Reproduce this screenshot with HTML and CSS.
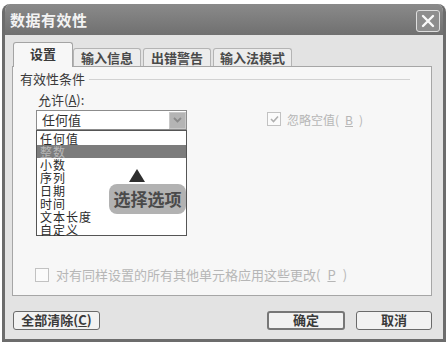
FILE: index.html
```html
<!DOCTYPE html>
<html lang="zh-CN">
<head>
    <meta charset="UTF-8">
    <title>数据有效性</title>
    <link rel="stylesheet" href="styles.css">
</head>
<body>
    <div class="dialog">
        <!-- Title bar -->
        <div class="titlebar">
            <span class="title">数据有效性</span>
            <span class="close-btn">
                <svg width="14" height="14" viewBox="0 0 14 14">
                    <path d="M2 2 L12 12 M12 2 L2 12" stroke="#fafafa" stroke-width="2.4" stroke-linecap="round"/>
                </svg>
            </span>
        </div>

        <div class="dialog-body">
            <!-- Tabs -->
            <div class="tabs">
                <div class="tab active">设置</div>
                <div class="tab tab-info">输入信息</div>
                <div class="tab tab-error">出错警告</div>
                <div class="tab tab-ime">输入法模式</div>
            </div>

            <!-- Tab panel -->
            <div class="panel">
                <div class="group-title">有效性条件<span class="rule"></span></div>

                <div class="criteria">
                    <div class="allow-col">
                        <div class="field-label">允许(<u>A</u>):</div>
                        <div class="combo">
                            <span>任何值</span>
                            <span class="combo-arrow">
                                <svg width="9" height="6" viewBox="0 0 9 6">
                                    <path d="M1 1 L4.5 4.5 L8 1" fill="none" stroke="#8a8a8a" stroke-width="1.8"/>
                                </svg>
                            </span>

                            <ul class="droplist">
                                <li>任何值</li>
                                <li class="selected">整数</li>
                                <li>小数</li>
                                <li>序列</li>
                                <li>日期</li>
                                <li>时间</li>
                                <li>文本长度</li>
                                <li>自定义</li>
                            </ul>

                            <span class="pointer"></span>
                            <span class="callout">选择选项</span>
                        </div>
                    </div>

                    <label class="check disabled ignore-blank">
                        <span class="box">
                            <svg width="9" height="8" viewBox="0 0 9 8">
                                <path d="M1 4 L3.5 6.5 L8 1.5" fill="none" stroke="#b0b0b0" stroke-width="1.6"/>
                            </svg>
                        </span>
                        忽略空值(<u>B</u>)
                    </label>
                </div>

                <label class="check disabled apply-all">
                    <span class="box"></span>
                    对有同样设置的所有其他单元格应用这些更改(<u>P</u>)
                </label>
            </div>

            <!-- Buttons -->
            <div class="buttons">
                <div class="btn btn-clear">全部清除(<u>C</u>)</div>
                <div class="btn btn-ok">确定</div>
                <div class="btn btn-cancel">取消</div>
            </div>
        </div>
    </div>
</body>
</html>
```

FILE: styles.css
```css
* {
    box-sizing: border-box;
    margin: 0;
    padding: 0;
}

body {
    background-color: #ffffff;
    font-family: "Noto Sans CJK SC", "DejaVu Sans", sans-serif;
    font-size: 13px;
    color: #2f2f2f;
}

u {
    text-decoration: underline;
}

.dialog {
    margin: 4px 0 0 2px;
    width: 444px;
    height: 338px;
    border: 3px solid #6c6c6c;
    border-top: none;
    border-radius: 8px 8px 0 0;
    background-color: #e3e3e3;
    display: flex;
    flex-direction: column;
    overflow: hidden;
}

/* Title bar */
.titlebar {
    height: 31px;
    flex: 0 0 auto;
    background: linear-gradient(#8a8a8a, #707070);
    display: flex;
    align-items: center;
    justify-content: space-between;
    padding: 0 3px 0 5px;
}

.title {
    font-size: 15px;
    font-weight: 700;
    color: #f3f3f3;
    letter-spacing: 0.5px;
}

.close-btn {
    width: 24px;
    height: 22px;
    margin-top: 2px;
    border: 1px solid #dedede;
    border-radius: 3px;
    background-color: #8e8e8e;
    display: flex;
    justify-content: center;
    align-items: center;
}

/* Body */
.dialog-body {
    flex: 1;
    display: flex;
    flex-direction: column;
    padding: 8px 11px 0 7px;
}

.tabs {
    display: flex;
    align-items: flex-end;
    height: 24px;
    margin-bottom: -1px;
}

.tab {
    height: 19px;
    border: 1px solid #b4b4b4;
    border-bottom: none;
    border-radius: 3px 3px 0 0;
    background-color: #ececec;
    text-align: center;
    font-weight: 700;
    line-height: 17px;
    color: #4a4a4a;
}

.tab.active {
    position: relative;
    z-index: 1;
    height: 25px;
    width: 60px;
    margin-left: 1px;
    background-color: #f7f7f7;
    border-color: #a4a4a4;
    line-height: 22px;
    color: #3a3a3a;
}

.tab-info {
    width: 68px;
}

.tab-error {
    width: 68px;
    margin-left: 2px;
}

.tab-ime {
    width: 79px;
    margin-left: 2px;
}

.panel {
    height: 230px;
    border: 1px solid #a6a6a6;
    background-color: #f7f7f7;
    display: flex;
    flex-direction: column;
}

.group-title {
    display: flex;
    align-items: center;
    gap: 4px;
    height: 14px;
    line-height: 14px;
    margin: 5px 21px 0 7px;
    color: #3a3a3a;
}

.rule {
    flex: 1;
    border-top: 1px solid #d2d2d2;
}

.criteria {
    display: flex;
    margin-top: 7px;
}

.allow-col {
    margin-left: 23px;
    width: 151px;
}

.field-label {
    margin-left: 2px;
    line-height: 14px;
    color: #3a3a3a;
}

.combo {
    position: relative;
    margin-top: 3px;
    height: 20px;
    border: 1px solid #8c8c8c;
    background-color: #ffffff;
    display: flex;
    align-items: center;
    justify-content: space-between;
    padding-left: 5px;
    line-height: 16px;
}

.combo-arrow {
    width: 17px;
    height: 17px;
    background-color: #b4b4b4;
    border: 1px solid #c8c8c8;
    display: flex;
    justify-content: center;
    align-items: center;
}

/* Open drop-down list */
.droplist {
    position: absolute;
    top: 19px;
    left: -1px;
    width: 151px;
    height: 106px;
    border: 1px solid #555555;
    background-color: #ffffff;
    list-style: none;
    padding-top: 1px;
    z-index: 2;
}

.droplist li {
    height: 13px;
    line-height: 13px;
    padding-left: 3px;
    font-size: 12px;
    letter-spacing: 1px;
    color: #2a2a2a;
}

.droplist li.selected {
    background-color: #7c7c7c;
    color: #b8b8b8;
}

.pointer {
    position: absolute;
    top: 58px;
    left: 92px;
    width: 0;
    height: 0;
    border-left: 8px solid transparent;
    border-right: 8px solid transparent;
    border-bottom: 13px solid #2e2e2e;
    z-index: 3;
}

.callout {
    position: absolute;
    top: 73px;
    left: 72px;
    width: 77px;
    height: 30px;
    border-radius: 8px;
    background-color: #b2b2b2;
    font-size: 17px;
    font-weight: 700;
    color: #4a4a4a;
    display: flex;
    justify-content: center;
    align-items: center;
    z-index: 3;
}

/* Check boxes */
.check {
    display: flex;
    align-items: center;
    gap: 6px;
}

.check.disabled {
    color: #b6b6b6;
}

.box {
    width: 14px;
    height: 14px;
    border: 1px solid #c2c2c2;
    background-color: #fbfbfb;
    display: flex;
    justify-content: center;
    align-items: center;
}

.ignore-blank {
    margin: 19px 0 0 80px;
    height: 14px;
    font-size: 12px;
    align-self: flex-start;
}

.apply-all {
    margin: auto 0 11px 22px;
    gap: 7px;
}

/* Buttons */
.buttons {
    display: flex;
    align-items: center;
    padding-top: 15px;
}

.btn {
    height: 19px;
    border: 1px solid #6a6a6a;
    border-radius: 3px;
    background-color: #f2f2f2;
    text-align: center;
    line-height: 16px;
    font-weight: 700;
    color: #3a3a3a;
}

.btn-clear {
    width: 87px;
    margin-left: 1px;
}

.btn-ok {
    width: 78px;
    margin-left: auto;
    border: 2px solid #777777;
    line-height: 14px;
}

.btn-cancel {
    width: 76px;
    margin-left: 11px;
}
```
